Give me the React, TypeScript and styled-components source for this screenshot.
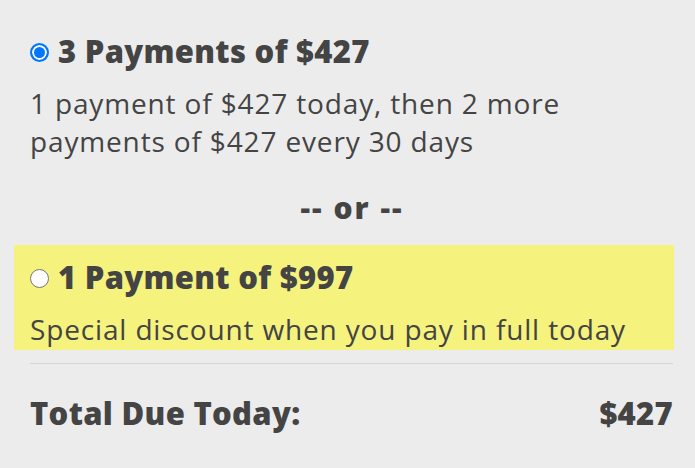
import styled, { createGlobalStyle } from "styled-components";

const GlobalStyle = createGlobalStyle`
  html, body {
    margin: 0;
    padding: 0;
    background: #ececec;
  }
  body {
    font-family: "Open Sans", "Lato", sans-serif;
    color: #444444;
  }
`;

const Wrapper = styled.div`
  display: flex;
  flex-direction: column;
  padding: 31px 21px 0 14px;
`;

const Option = styled.label<{ $highlight?: boolean }>`
  display: flex;
  flex-direction: column;
  padding: ${(p) => (p.$highlight ? "12px 0 2px 16px" : "0 0 0 16px")};
  background: ${(p) => (p.$highlight ? "#f5f27e" : "transparent")};
  cursor: pointer;
`;

const OptionHead = styled.div`
  display: flex;
  align-items: center;
  gap: 9px;
`;

const Radio = styled.input.attrs({ type: "radio" })`
  appearance: none;
  margin: 3px 0 0 0;
  width: 19px;
  height: 19px;
  border-radius: 50%;
  border: 1px solid #767676;
  background: #fff;
  flex-shrink: 0;
  &:checked {
    border: 2px solid #0075ff;
    box-shadow: inset 0 0 0 2px #fff;
    background: #0075ff;
  }
`;

const OptionTitle = styled.div`
  font-size: 31px;
  font-weight: 800;
  line-height: 40px;
  letter-spacing: 0.3px;
`;

const OptionDesc = styled.div`
  font-size: 28px;
  line-height: 38px;
  letter-spacing: 0.85px;
  margin-top: 13px;
`;

const Separator = styled.div`
  text-align: center;
  font-size: 30px;
  font-weight: 800;
  line-height: 36px;
  letter-spacing: 2px;
  padding: 30px 0 19px 16px;
`;

const Divider = styled.hr`
  border: none;
  border-top: 1px solid #d5d5d5;
  margin: 13px 1px 0 16px;
`;

const TotalRow = styled.div`
  display: flex;
  justify-content: space-between;
  align-items: baseline;
  padding: 29px 1px 0 16px;
  font-size: 31px;
  font-weight: 800;
  line-height: 40px;
  letter-spacing: 0.3px;
`;

export default function App() {
  return (
    <>
      <GlobalStyle />
      <Wrapper>
        <Option>
          <OptionHead>
            <Radio name="plan" defaultChecked />
            <OptionTitle>3 Payments of $427</OptionTitle>
          </OptionHead>
          <OptionDesc>
            1 payment of $427 today, then 2 more
            <br />
            payments of $427 every 30 days
          </OptionDesc>
        </Option>
        <Separator>-- or --</Separator>
        <Option $highlight>
          <OptionHead>
            <Radio name="plan" />
            <OptionTitle>1 Payment of $997</OptionTitle>
          </OptionHead>
          <OptionDesc>Special discount when you pay in full today</OptionDesc>
        </Option>
        <Divider />
        <TotalRow>
          <span>Total Due Today:</span>
          <span>$427</span>
        </TotalRow>
      </Wrapper>
    </>
  );
}
